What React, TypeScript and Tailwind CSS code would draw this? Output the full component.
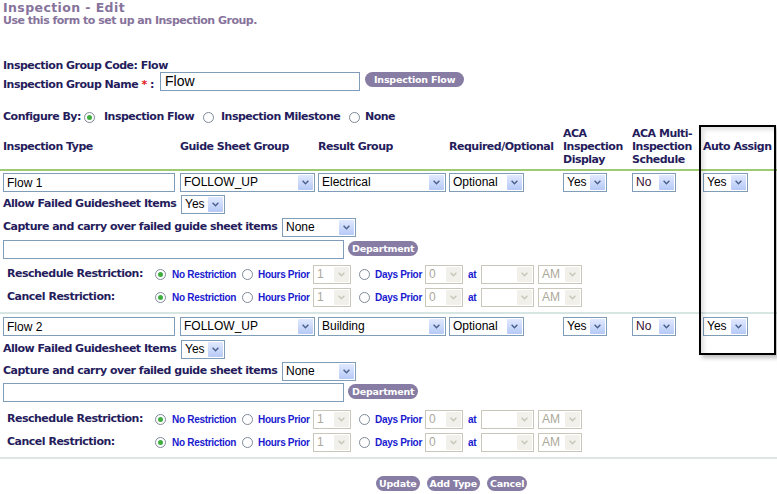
import React from "react";

const navy = "text-[#251c5c]";
const bold = "text-[11px] font-bold tracking-[-0.5px] whitespace-nowrap";
const blue =
  "whitespace-nowrap font-['Liberation_Sans',Arial,sans-serif] text-[10px] font-bold tracking-[-0.3px] text-[#1a1ad0]";

function Chevron({ disabled }: { disabled?: boolean }) {
  return (
    <svg width="7" height="5" viewBox="0 0 7 5">
      <path
        d="M0.6 0.8 L3.5 3.7 L6.4 0.8"
        fill="none"
        stroke={disabled ? "#c7c5b8" : "#4a5f8c"}
        strokeWidth="1.4"
      />
    </svg>
  );
}

function Select({
  value,
  w,
  disabled,
  color = "text-black",
}: {
  value: string;
  w: string;
  disabled?: boolean;
  color?: string;
}) {
  return (
    <div
      className={`flex h-[19px] shrink-0 items-center border bg-white ${w} ${
        disabled ? "border-[#c9c7ba]" : "border-[#7f9db9]"
      }`}
    >
      <span
        className={`flex-1 overflow-hidden whitespace-nowrap pl-[3px] font-['Liberation_Sans',Arial,sans-serif] text-[12px] leading-[17px] ${
          disabled ? "text-[#aca899]" : color
        }`}
      >
        {value}
      </span>
      <span
        className={`mr-[1px] flex h-[15px] w-[15px] items-center justify-center rounded-[1px] ${
          disabled
            ? "bg-[#f1f0ea]"
            : "bg-gradient-to-b from-[#e1e9fe] to-[#b6c9f6]"
        }`}
      >
        <Chevron disabled={disabled} />
      </span>
    </div>
  );
}

function TextInput({ value = "", w }: { value?: string; w: string }) {
  return (
    <div
      className={`flex h-[19px] shrink-0 items-center border border-[#7f9db9] bg-white pl-[3px] font-['Liberation_Sans',Arial,sans-serif] text-[12px] text-black ${w}`}
    >
      {value}
    </div>
  );
}

function PillButton({ label, px = "px-[4px]" }: { label: string; px?: string }) {
  return (
    <span
      className={`inline-flex h-[15px] shrink-0 items-center whitespace-nowrap rounded-full bg-[#877ca3] text-[9.5px] font-bold leading-none tracking-[-0.2px] text-white ${px}`}
    >
      {label}
    </span>
  );
}

function Radio({ checked }: { checked?: boolean }) {
  return (
    <span className="flex h-[11px] w-[11px] shrink-0 items-center justify-center rounded-full border border-[#7e8a97] bg-white">
      {checked && <span className="h-[5px] w-[5px] rounded-full bg-[#3fae3f]" />}
    </span>
  );
}

function Restriction({ label }: { label: string }) {
  return (
    <div className="flex h-[19px] items-center pl-[7px]">
      <span className={`w-[148px] ${bold} ${navy}`}>{label}</span>
      <Radio checked />
      <span className={`ml-[6px] w-[70px] ${blue}`}>No Restriction</span>
      <Radio />
      <span className={`ml-[5px] w-[55px] ${blue}`}>Hours Prior</span>
      <Select value="1" w="w-[38px]" disabled />
      <span className="ml-[8px]" />
      <Radio />
      <span className={`ml-[5px] w-[50px] ${blue}`}>Days Prior</span>
      <Select value="0" w="w-[38px]" disabled />
      <span className={`ml-[5px] w-[13px] ${blue}`}>at</span>
      <Select value="" w="w-[53px]" disabled />
      <span className="ml-[4px]" />
      <Select value="AM" w="w-[44px]" disabled />
    </div>
  );
}

function InspectionType({
  name,
  result,
  first,
}: {
  name: string;
  result: string;
  first?: boolean;
}) {
  return (
    <div>
      <div className="flex h-[19px] items-center pl-[3px]">
        <div className="w-[177px]">
          <TextInput value={name} w="w-[172px]" />
        </div>
        <div className="w-[138px]">
          <Select value="FOLLOW_UP" w="w-[135px]" />
        </div>
        <div className="w-[131px]">
          <Select value={result} w="w-[128px]" />
        </div>
        <div className="w-[114px]">
          <Select value="Optional" w="w-[75px]" />
        </div>
        <div className="w-[69px]">
          <Select value="Yes" w="w-[44px]" />
        </div>
        <div className="w-[71px]">
          <Select value="No" w="w-[44px]" color="text-[#3a1030]" />
        </div>
        <Select value="Yes" w="w-[45px]" />
      </div>
      <div className={`flex h-[19px] items-center pl-[3px] ${first ? "mt-[3px]" : "mt-[4px]"}`}>
        <span className={`w-[178px] ${bold} ${navy}`}>Allow Failed Guidesheet Items</span>
        <Select value="Yes" w="w-[44px]" />
      </div>
      <div className={`flex h-[19px] items-center pl-[3px] ${first ? "mt-[4px]" : "mt-[3px]"}`}>
        <span className={`w-[279px] ${bold} ${navy}`}>
          Capture and carry over failed guide sheet items
        </span>
        <Select value="None" w="w-[74px]" />
      </div>
      <div className={`flex h-[19px] items-start pl-[3px] ${first ? "mt-[3px]" : "mt-[2px]"}`}>
        <TextInput w="w-[341px]" />
        <span className="ml-[4px] mt-[1px]">
          <PillButton label="Department" />
        </span>
      </div>
      <div className={first ? "mt-[6px]" : "mt-[8px]"}>
        <Restriction label="Reschedule Restriction:" />
      </div>
      <div className="mt-[4px]">
        <Restriction label="Cancel Restriction:" />
      </div>
    </div>
  );
}

export default function App() {
  return (
    <div className="relative h-[494px] w-[777px] overflow-hidden bg-white font-['DejaVu_Sans',Verdana,sans-serif] text-[11px]">
      <div className="pl-[3px] pt-[1px] text-[#86739b]">
        <div className="h-[13px] whitespace-nowrap text-[12.5px] font-bold leading-[13px] tracking-[0.4px]">
          Inspection - Edit
        </div>
        <div className={`h-[14px] leading-[14px] ${bold}`}>
          Use this form to set up an Inspection Group.
        </div>
      </div>

      <div className={`mt-[31px] h-[13px] pl-[3px] leading-[13px] ${bold} ${navy}`}>
        Inspection Group Code: Flow
      </div>

      <div className="flex h-[20px] items-start pl-[3px]">
        <span className={`mt-[6px] w-[157px] leading-[13px] ${bold} ${navy}`}>
          Inspection Group Name <span className="text-[#e0201a]">*</span> :
        </span>
        <div className="flex h-[19px] w-[200px] items-center border border-[#7f9db9] bg-white pl-[4px] font-['Liberation_Sans',Arial,sans-serif] text-[14px] text-black">
          Flow
        </div>
        <span className="ml-[5px]">
          <PillButton label="Inspection Flow" px="px-[9px]" />
        </span>
      </div>

      <div className={`mt-[17px] flex h-[16px] items-center pl-[3px] ${bold} ${navy}`}>
        <span className="w-[81px]">Configure By:</span>
        <Radio checked />
        <span className="ml-[9px] w-[99px]">Inspection Flow</span>
        <Radio />
        <span className="ml-[7px] w-[128px]">Inspection Milestone</span>
        <Radio />
        <span className="ml-[5px]">None</span>
      </div>

      <div className={`flex h-[42px] items-center pl-[3px] leading-[13px] ${bold} ${navy}`}>
        <span className="w-[177px]">Inspection Type</span>
        <span className="w-[138px]">Guide Sheet Group</span>
        <span className="w-[131px]">Result Group</span>
        <span className="w-[114px]">Required/Optional</span>
        <span className="w-[69px]">
          ACA
          <br />
          Inspection
          <br />
          Display
        </span>
        <span className="w-[71px]">
          ACA Multi-
          <br />
          Inspection
          <br />
          Schedule
        </span>
        <span>Auto Assign</span>
      </div>

      <div className="mt-[2px] h-[2px] bg-[#9fca74]" />

      <div className="mt-[2px]">
        <InspectionType name="Flow 1" result="Electrical" first />
      </div>

      <div className="mt-[5px] h-[2px] bg-[#d7e5e3]" />

      <div className="mt-[3px]">
        <InspectionType name="Flow 2" result="Building" />
      </div>

      <div className="mt-[5px] h-[2px] bg-[#dde6e4]" />

      <div className="mt-[17px] flex gap-[7px] pl-[376px]">
        <PillButton label="Update" px="px-[3px]" />
        <PillButton label="Add Type" px="px-[3px]" />
        <PillButton label="Cancel" px="px-[3px]" />
      </div>

      <div className="pointer-events-none absolute left-[699px] top-[125px] h-[230px] w-[77px] border-2 border-black shadow-[3px_3px_4px_rgba(0,0,0,0.25),inset_3px_3px_4px_rgba(0,0,0,0.12)]" />
    </div>
  );
}
